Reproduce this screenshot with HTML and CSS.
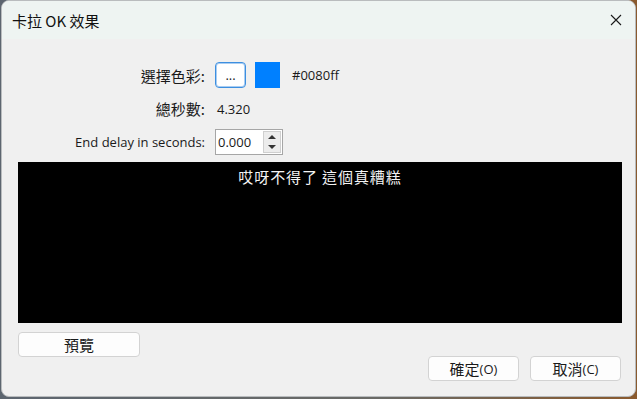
FILE: index.html
```html
<!DOCTYPE html>
<html lang="zh-Hant">
<head>
    <meta charset="UTF-8">
    <title>卡拉 OK 效果</title>
    <link rel="stylesheet" href="styles.css">
</head>
<body>
    <div class="window">
        <div class="titlebar">
            <span class="title">卡拉 OK 效果</span>
            <span class="close">
                <svg width="12" height="12" viewBox="0 0 12 12">
                    <path d="M1 1 L11 11 M11 1 L1 11" stroke="#1a1a1a" stroke-width="1.1" fill="none"/>
                </svg>
            </span>
        </div>

        <div class="content">
            <div class="form">
                <div class="label cjk">選擇色彩:</div>
                <div class="field">
                    <button class="pick-btn">...</button>
                    <span class="swatch"></span>
                    <span class="hex">#0080ff</span>
                </div>

                <div class="label cjk">總秒數:</div>
                <div class="field value">4.320</div>

                <div class="label">End delay in seconds:</div>
                <div class="field">
                    <div class="spin">
                        <span class="spin-value">0.000</span>
                        <span class="spin-btns">
                            <span class="arrow up"></span>
                            <span class="arrow down"></span>
                        </span>
                    </div>
                </div>
            </div>

            <div class="preview">
                <span class="preview-text">哎呀不得了 這個真糟糕</span>
            </div>

            <div class="actions">
                <button class="btn wide cjk">預覽</button>
                <div class="dialog-btns">
                    <button class="btn cjk">確定<span class="latin">(O)</span></button>
                    <button class="btn cjk">取消<span class="latin">(C)</span></button>
                </div>
            </div>
        </div>
    </div>
</body>
</html>
```

FILE: styles.css
```css
* {
    margin: 0;
    padding: 0;
    box-sizing: border-box;
}

body {
    width: 637px;
    height: 399px;
    overflow: hidden;
    font-family: 'Open Sans', 'Noto Sans', 'Noto Sans CJK TC', sans-serif;
    font-size: 13px;
    color: #1a1a1a;
    background: linear-gradient(90deg, #5d6670 0%, #6a6a66 60%, #8a5a2e 100%);
}

/* Окно диалога */
.window {
    position: absolute;
    left: 1px;
    top: 0;
    width: 635px;
    height: 397px;
    background: #f0f0f0;
    border: 1px solid #b9bcbe;
    border-radius: 8px;
    overflow: hidden;
}

.titlebar {
    height: 38px;
    background: #eef4f2;
    display: flex;
    align-items: center;
    justify-content: space-between;
    padding: 0 13px 0 10px;
}

.title {
    font-family: 'Noto Sans CJK TC', sans-serif;
    font-size: 15px;
    color: #111;
}

.close {
    display: flex;
    width: 12px;
    height: 12px;
}

.cjk {
    font-family: 'Noto Sans CJK TC', sans-serif;
    font-size: 15px;
}

.latin {
    font-family: 'Open Sans', sans-serif;
    font-size: 13px;
}

.content {
    padding: 23px 14px 0 16px;
}

/* Форма */
.form {
    display: grid;
    grid-template-columns: 187px auto;
    column-gap: 10px;
    row-gap: 5px;
    align-items: center;
}

.label {
    text-align: right;
    white-space: nowrap;
}

.field {
    display: flex;
    align-items: center;
    height: 26px;
}

.field.value {
    height: 31px;
    padding-left: 2px;
}

.pick-btn {
    width: 31px;
    height: 26px;
    background: #fff;
    border: 1px solid #3d8fe0;
    border-radius: 4px;
    font-family: 'Open Sans', sans-serif;
    font-size: 13px;
    color: #1a1a1a;
    box-shadow: inset 0 0 0 1px #a9cdf2;
}

.swatch {
    width: 25px;
    height: 26px;
    background: #0080ff;
    margin-left: 9px;
}

.hex {
    margin-left: 12px;
}

.spin {
    width: 68px;
    height: 26px;
    background: #fff;
    border: 1px solid #a6a6a6;
    display: flex;
    align-items: center;
    justify-content: space-between;
    padding: 0 1px 0 2px;
}

.spin-btns {
    width: 18px;
    height: 22px;
    background: #ececec;
    border: 1px solid #cfcfcf;
    display: flex;
    flex-direction: column;
    align-items: center;
    justify-content: space-around;
}

.arrow {
    width: 0;
    height: 0;
    border-left: 4px solid transparent;
    border-right: 4px solid transparent;
}

.arrow.up {
    border-bottom: 4px solid #333;
}

.arrow.down {
    border-top: 4px solid #333;
}

/* Область просмотра */
.preview {
    margin-top: 7px;
    height: 161px;
    width: 604px;
    background: #000;
    text-align: center;
    padding-top: 4px;
}

.preview-text {
    font-family: 'Noto Sans CJK TC', sans-serif;
    font-size: 15px;
    color: #f4f4f4;
    letter-spacing: 0.9px;
}

/* Кнопки */
.actions {
    margin-top: 9px;
    display: flex;
    flex-direction: column;
}

.btn {
    width: 91px;
    height: 25px;
    background: #fdfdfd;
    border: 1px solid #d3d3d3;
    border-radius: 4px;
    color: #1a1a1a;
    display: flex;
    align-items: center;
    justify-content: center;
}

.btn.wide {
    width: 122px;
}

.dialog-btns {
    display: flex;
    justify-content: flex-end;
    gap: 11px;
    margin-top: -1px;
    padding-right: 0;
}
```
